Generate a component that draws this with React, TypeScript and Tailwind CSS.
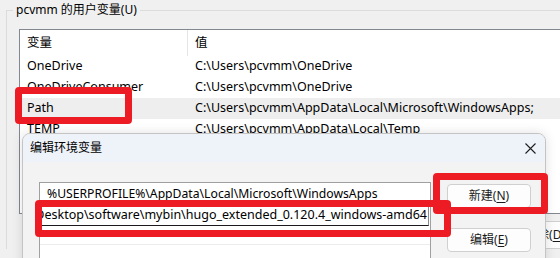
import React from 'react';

const font = "font-['Segoe_UI','Noto_Sans','Noto_Sans_CJK_SC',sans-serif]";

const rows = [
  { name: 'OneDrive', value: 'C:\\Users\\pcvmm\\OneDrive' },
  { name: 'OneDriveConsumer', value: 'C:\\Users\\pcvmm\\OneDrive' },
  { name: 'Path', value: 'C:\\Users\\pcvmm\\AppData\\Local\\Microsoft\\WindowsApps;', selected: true },
  { name: 'TEMP', value: 'C:\\Users\\pcvmm\\AppData\\Local\\Temp' },
  { name: 'TMP', value: 'C:\\Users\\pcvmm\\AppData\\Local\\Temp' },
];

const WinButton = ({ label, hotkey, className = '' }: { label: string; hotkey: string; className?: string }) => (
  <div
    className={`w-[84px] h-[24px] flex items-center justify-center rounded-[4px] border border-[#d0d0d0] bg-[#fdfdfd] text-[12px] text-[#1a1a1a] ${className}`}
  >
    {label}(<span className="underline underline-offset-2">{hotkey}</span>)
  </div>
);

const RedBox = ({ className }: { className: string }) => (
  <div className={`absolute border-[7px] border-[#ed1c24] rounded-[4px] pointer-events-none ${className}`} />
);

export default function App() {
  return (
    <div className={`relative w-[560px] h-[258px] overflow-hidden bg-[#f0f0f0] text-[12.5px] text-black ${font}`}>
      {/* background window: user variables group */}
      <div className="w-[640px]">
        <div className="relative mt-[10px] ml-[6px] border-t border-l border-[#dcdcdc]">
          <span className="absolute -top-[9px] left-[6px] px-[3px] bg-[#f0f0f0] leading-[16px] text-[12px]">
            pcvmm 的用户变量(U)
          </span>
          <div className="mt-[18px] ml-[12px] h-[185px] border border-[#828790] bg-white">
            <div className="flex h-[26px] items-center">
              <div className="w-[168px] h-full flex items-center pl-[7px] border-r border-[#e5e5e5]">变量</div>
              <div className="pl-[7px]">值</div>
            </div>
            {rows.map((r) => (
              <div key={r.name} className={`flex h-[21px] items-center ${r.selected ? 'bg-[#eeeeee]' : ''}`}>
                <div className="w-[168px] pl-[7px] whitespace-nowrap">{r.name}</div>
                <div className="pl-[7px] whitespace-nowrap">{r.value}</div>
              </div>
            ))}
          </div>
          <div className="mt-[7px] ml-[312px] flex gap-[8px]">
            <WinButton label="新建" hotkey="W" />
            <WinButton label="编辑" hotkey="I" />
            <WinButton label="删除" hotkey="D" className="h-[28px]" />
          </div>
        </div>
      </div>

      {/* edit dialog */}
      <div className="absolute left-[22px] top-[133px] w-[524px] h-[140px] rounded-t-[8px] border border-[#c4c4c4] bg-[#f3f3f3] shadow-[0_0_12px_rgba(0,0,0,0.12)] overflow-hidden">
        <div className="h-[28px] flex items-center justify-between pl-[7px] pr-[9px] bg-[#eef2f9]">
          <span className="text-[12px]">编辑环境变量</span>
          <svg width="11" height="11" viewBox="0 0 11 11" className="mt-[1px]">
            <path d="M0.5 0.5 L10.5 10.5 M10.5 0.5 L0.5 10.5" stroke="#1f1f1f" strokeWidth="1.1" />
          </svg>
        </div>
        <div className="flex pl-[16px] pt-[20px]">
          <div className="w-[392px] h-[100px] border border-[#a0a0a0] bg-white">
            <div className="h-[22px] flex items-center pl-[7px] whitespace-nowrap text-[12.2px]">
              %USERPROFILE%\AppData\Local\Microsoft\WindowsApps
            </div>
            <div className="ml-[1px] w-[388px] h-[21px] flex items-center justify-end overflow-hidden border border-[#8a8a8a] border-b-[#1a1a1a] pr-[1px] whitespace-nowrap text-[12.5px]">
              C:\Users\pcvmm\Desktop\software\mybin\hugo_extended_0.120.4_windows-amd64
            </div>
            <div className="h-[19px] border-b border-[#ececec]" />
          </div>
          <div className="ml-[16px] pt-[2px] flex flex-col gap-[20px]">
            <WinButton label="新建" hotkey="N" />
            <WinButton label="编辑" hotkey="E" />
          </div>
        </div>
      </div>

      {/* annotation boxes */}
      <RedBox className="left-[15px] top-[87px] w-[117px] h-[37px]" />
      <RedBox className="left-[35px] top-[200px] w-[416px] h-[37px]" />
      <RedBox className="left-[433px] top-[173px] w-[115px] h-[41px]" />
    </div>
  );
}
